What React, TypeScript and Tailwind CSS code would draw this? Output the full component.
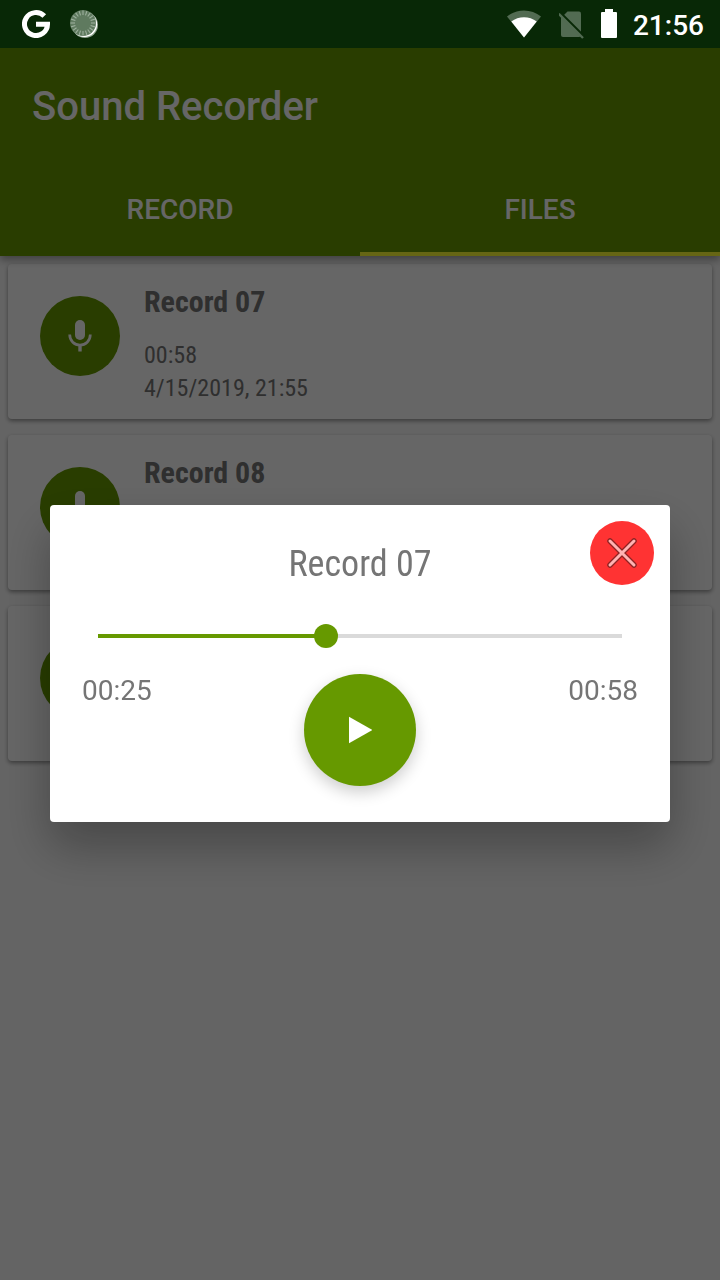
import { useState } from "react";

type Recording = { name: string; length: string; date: string };

const recordings: Recording[] = [
  { name: "Record 07", length: "00:58", date: "4/15/2019, 21:55" },
  { name: "Record 08", length: "00:12", date: "4/15/2019, 21:55" },
  { name: "Record 09", length: "00:07", date: "4/15/2019, 21:56" },
];

// Milliseconds
const DURATION = 58000;

function clock(ms: number) {
  const seconds = Math.floor(ms / 1000);
  const m = String(Math.floor(seconds / 60)).padStart(2, "0");
  return `${m}:${String(seconds % 60).padStart(2, "0")}`;
}

function GoogleIcon() {
  return (
    <svg viewBox="0 0 28 28" className="size-7" fill="none" aria-hidden="true">
      <path d="M22.300 6.100A11.500 11.500 0 1 0 25.500 14.200H14" stroke="#fff" strokeWidth="5" />
    </svg>
  );
}

function SyncIcon() {
  const ticks = Array.from({ length: 20 }, (_, i) => i * 18);
  return (
    <svg viewBox="0 0 28 28" className="size-7" aria-hidden="true">
      <circle cx="15" cy="15" r="13" fill="#8ea38e" />
      <circle cx="14.300" cy="14.300" r="12.800" fill="#fff" />
      <circle cx="13" cy="13" r="13" fill="#5f7a5f" />
      <g stroke="#9db09d" strokeWidth="1.100">
        {ticks.map((a) => (
          <line key={a} x1="13" y1=".5" x2="13" y2="5" transform={`rotate(${a} 13 13)`} />
        ))}
      </g>
    </svg>
  );
}

function WifiIcon() {
  return (
    <svg viewBox="0 0 34 28" className="h-7 w-[34px]" aria-hidden="true">
      <path d="M0 6.500C9.500-1.500 24.500-1.500 34 6.500L17 27.500z" fill="#526b52" />
      <path d="M4.300 11.500C11.500 5.800 22.500 5.800 29.700 11.500L17 27.500z" fill="#fff" />
    </svg>
  );
}

function NoSimIcon() {
  return (
    <svg viewBox="0 0 26 29" className="h-[29px] w-[26px]" aria-hidden="true">
      <path d="M8.500 1.500H20a2 2 0 0 1 2 2V25a2 2 0 0 1-2 2H4a2 2 0 0 1-2-2V8z" fill="#526b52" />
      <path d="M-1 .500L25 26.500" stroke="#082806" strokeWidth="2.600" />
      <path d="M-.200 3.800L24 28" stroke="#526b52" strokeWidth="2.400" />
    </svg>
  );
}

function BatteryIcon() {
  return (
    <svg viewBox="0 0 16 30" className="h-[30px] w-4" fill="#fff" aria-hidden="true">
      <path d="M4 0h8v3h3a1 1 0 0 1 1 1v24a1 1 0 0 1-1 1H1a1 1 0 0 1-1-1V4a1 1 0 0 1 1-1h3z" />
    </svg>
  );
}

function MicIcon() {
  return (
    <svg viewBox="0 0 24 32" className="h-8 w-6" fill="none" aria-hidden="true">
      <rect x="7" y="0" width="10" height="20" rx="5" fill="#fff" />
      <path d="M1.700 14.500C1.700 21 6.500 25 12 25S22.300 21 22.300 14.500" stroke="#fff" strokeWidth="2.700" />
      <path d="M12 25v6.500" stroke="#fff" strokeWidth="3.400" />
    </svg>
  );
}

function StatusBar() {
  return (
    <div className="relative z-20 flex h-12 items-center justify-between bg-[#082806] pr-4 pl-[22px]">
      <div className="flex items-center gap-5">
        <GoogleIcon />
        <SyncIcon />
      </div>
      <div className="flex items-center gap-4">
        <div className="flex items-center gap-[18px]">
          <WifiIcon />
          <NoSimIcon />
        </div>
        <BatteryIcon />
        <span className="pt-1 text-[28px] leading-8 font-medium text-white">21:56</span>
      </div>
    </div>
  );
}

function RecordingCard({ item }: { item: Recording }) {
  return (
    <li className="flex items-start gap-6 rounded bg-white px-8 pt-4 pb-[14px] shadow-[0_2px_4px_rgba(0,0,0,0.4)]">
      <span className="mt-4 flex size-20 shrink-0 items-center justify-center rounded-full bg-[#669900]">
        <MicIcon />
      </span>
      <div className="font-['Roboto_Condensed',Roboto,sans-serif] text-[#757575]">
        <h2 className="mb-4 text-[30px] leading-[43px] font-bold">{item.name}</h2>
        <p className="text-2xl leading-[33px]">{item.length}</p>
        <p className="text-2xl leading-[33px]">{item.date}</p>
      </div>
    </li>
  );
}

function PlayerDialog({ onClose }: { onClose: () => void }) {
  const [position, setPosition] = useState(25240);
  return (
    <div
      role="dialog"
      aria-labelledby="player-title"
      className="w-full rounded bg-white px-8 pb-9 text-[#757575] shadow-[0_24px_48px_rgba(0,0,0,0.3)]"
    >
      <div className="-mr-4 grid grid-cols-[64px_1fr_64px] gap-x-4 pt-4">
        <h2
          id="player-title"
          className="col-start-2 -ml-4 pt-5 text-center font-['Roboto_Condensed',Roboto,sans-serif] text-4xl leading-[46px]"
        >
          {recordings[0].name}
        </h2>
        <button
          type="button"
          aria-label="Close"
          onClick={onClose}
          className="flex size-16 items-center justify-center rounded-full bg-[#ff3333]"
        >
          <svg viewBox="0 0 32 32" className="size-8" strokeLinecap="round" aria-hidden="true">
            <path d="M4 4L28 28M28 4L4 28" stroke="#8e2323" strokeWidth="5.500" />
            <path d="M4 4L28 28M28 4L4 28" stroke="#ffb3b3" strokeWidth="3" />
          </svg>
        </button>
      </div>
      <div className="mx-1 mt-[37px] grid items-center">
        <div className="col-start-1 row-start-1 mx-3 h-1 bg-[#dadada]">
          <div className="h-1 bg-[#669900]" style={{ width: `${(position / DURATION) * 100}%` }} />
        </div>
        <input
          type="range"
          aria-label="Position"
          min={0}
          max={DURATION}
          value={position}
          onChange={(e) => setPosition(Number(e.target.value))}
          className="col-start-1 row-start-1 h-6 w-full appearance-none bg-transparent [&::-webkit-slider-thumb]:size-6 [&::-webkit-slider-thumb]:appearance-none [&::-webkit-slider-thumb]:rounded-full [&::-webkit-slider-thumb]:bg-[#669900]"
        />
      </div>
      <div className="mt-[26px] flex items-start justify-between text-[28px] leading-[34px]">
        <span className="flex-1">{clock(position)}</span>
        <button
          type="button"
          aria-label="Play"
          className="flex size-28 items-center justify-center rounded-full bg-[#669900] shadow-[0_6px_16px_rgba(0,0,0,0.2)]"
        >
          <svg viewBox="0 0 24 28" className="h-7 w-6" fill="#fff" aria-hidden="true">
            <path d="M1 .8L24.500 14L1 27.200z" />
          </svg>
        </button>
        <span className="flex-1 text-right">{clock(DURATION)}</span>
      </div>
    </div>
  );
}

export default function App() {
  const [open, setOpen] = useState(true);
  return (
    <div className="flex min-h-screen flex-col bg-[#fafafa] font-[Roboto,sans-serif]">
      <StatusBar />
      <header className="relative bg-[#669900] text-white shadow-[0_4px_8px_rgba(0,0,0,0.35)]">
        <h1 className="px-8 pt-8 pb-[26px] text-[40px] leading-[54px] font-medium">Sound Recorder</h1>
        <nav className="grid grid-cols-2 text-[28px] leading-8 font-medium">
          <button type="button" className="h-24 border-b-4 border-transparent pt-2">RECORD</button>
          <button type="button" className="h-24 border-b-4 border-[#ffff33] pt-2">FILES</button>
        </nav>
      </header>
      <main className="p-2">
        <ul className="flex flex-col gap-4">
          {recordings.map((r) => (
            <RecordingCard key={r.name} item={r} />
          ))}
        </ul>
      </main>
      {open && (
        <div className="fixed inset-0 z-10 flex items-center justify-center bg-black/60 px-[50px] pt-12 pb-0.5">
          <PlayerDialog onClose={() => setOpen(false)} />
        </div>
      )}
    </div>
  );
}
